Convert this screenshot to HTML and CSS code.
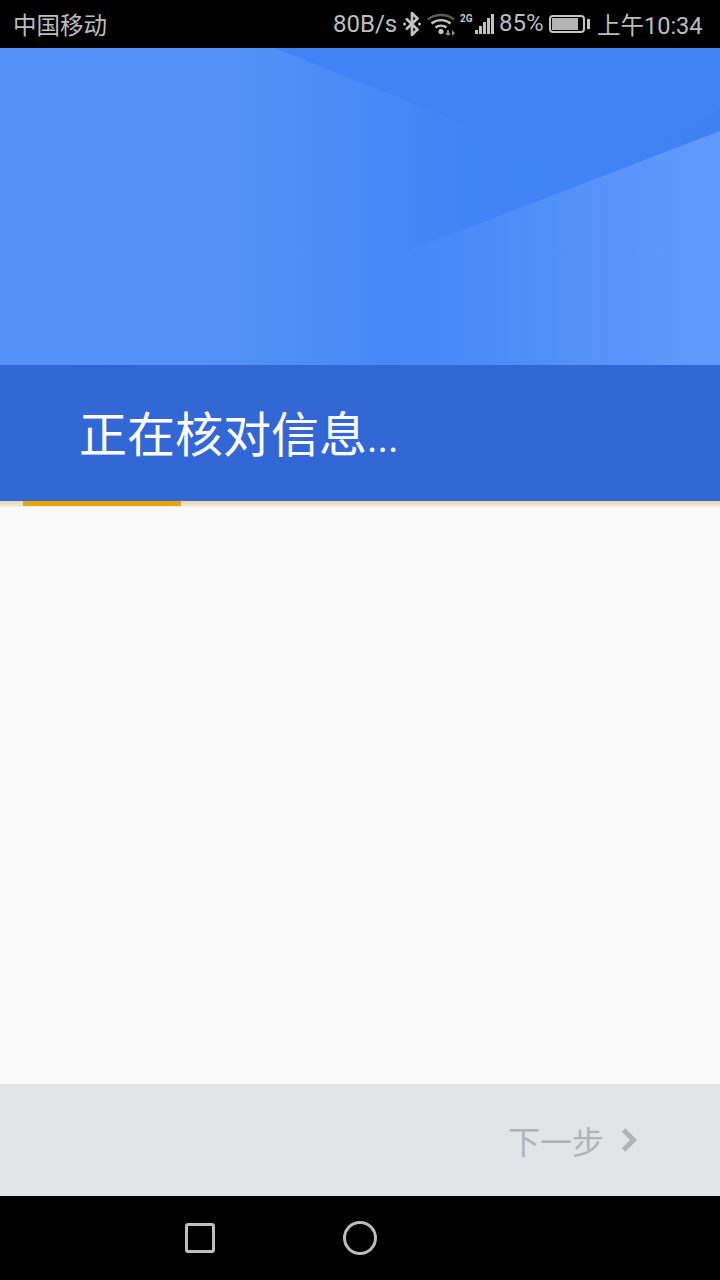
FILE: index.html
```html
<!DOCTYPE html>
<html lang="zh-CN">

<head>
    <meta charset="utf-8">
    <title>正在核对信息</title>
    <link rel="stylesheet" href="styles.css">
</head>

<body>
    <div class="screen">
        <div class="status-bar">
            <span class="carrier">中国移动</span>
            <div class="status-right">
                <span class="speed">80B/s</span>
                <svg class="icon-bt" width="18" height="24" viewBox="0 0 18 24">
                    <path d="M3 6.500 14.500 17.500 9 23V1l5.500 5.500L3 17.500" fill="none" stroke="#c4c4c4" stroke-width="2.600"/>
                    <circle cx="1.500" cy="12" r="1.500" fill="#c4c4c4"/>
                    <circle cx="16.500" cy="12" r="1.500" fill="#c4c4c4"/>
                </svg>
                <svg class="icon-wifi" width="28" height="24" viewBox="0 0 28 24">
                    <path d="M1 7.500C8 1.500 20 1.500 27 7.500" fill="none" stroke="#5c5c5c" stroke-width="2.400"/>
                    <path d="M4.500 11.500C10 7 18 7 23.500 11.500" fill="none" stroke="#c4c4c4" stroke-width="2.400"/>
                    <path d="M8.500 15.500C11.500 13 16.500 13 19.500 15.500" fill="none" stroke="#c4c4c4" stroke-width="2.400"/>
                    <circle cx="14" cy="19.500" r="2.600" fill="#c4c4c4"/>
                    <path d="M20 18h2v3h2l-3 3-3-3h2zM25 24v-6l3 3z" fill="#8f8f8f"/>
                </svg>
                <div class="signal">
                    <span class="net">2G</span>
                    <div class="bars">
                        <i class="bar-1"></i>
                        <i class="bar-2"></i>
                        <i class="bar-3"></i>
                        <i class="bar-4"></i>
                        <i class="bar-5"></i>
                    </div>
                </div>
                <span class="percent">85%</span>
                <div class="battery">
                    <div class="battery-body">
                        <div class="battery-level"></div>
                    </div>
                    <div class="battery-tip"></div>
                </div>
                <span class="clock">上午10:34</span>
            </div>
        </div>

        <div class="hero">
            <svg class="hero-art" width="720" height="317" viewBox="0 0 720 317" preserveAspectRatio="none">
                <defs>
                    <linearGradient id="heroBase" x1="0" y1="0" x2="1" y2="0">
                        <stop offset="0" stop-color="#5593f8"/>
                        <stop offset="0.320" stop-color="#5391f7"/>
                        <stop offset="0.640" stop-color="#4085f6"/>
                        <stop offset="1" stop-color="#3f83f6"/>
                    </linearGradient>
                    <linearGradient id="heroLight" x1="380" y1="0" x2="690" y2="0" gradientUnits="userSpaceOnUse">
                        <stop offset="0" stop-color="#6099fb" stop-opacity="0"/>
                        <stop offset="1" stop-color="#6099fb"/>
                    </linearGradient>
                    <linearGradient id="heroShade" x1="600" y1="60" x2="720" y2="60" gradientUnits="userSpaceOnUse">
                        <stop offset="0" stop-color="#3a7de8" stop-opacity="0"/>
                        <stop offset="1" stop-color="#3a7de8" stop-opacity="0.350"/>
                    </linearGradient>
                </defs>
                <rect width="720" height="317" fill="url(#heroBase)"/>
                <polygon points="275,0 720,0 720,83 599,130" fill="#3f83f6"/>
                <polygon points="720,60 720,83 600,129" fill="url(#heroShade)"/>
                <polygon points="720,83 720,317 340,317 340,229" fill="url(#heroLight)"/>
            </svg>
        </div>

        <div class="notice">
            <h1>正在核对信息<span class="dots">...</span></h1>
        </div>

        <div class="progress">
            <div class="progress-fill"></div>
        </div>

        <div class="content"></div>

        <div class="footer">
            <span class="next">下一步</span>
            <svg class="next-arrow" width="16" height="24" viewBox="0 0 16 24">
                <path d="M2.500 2 12.500 12 2.500 22" fill="none" stroke="#b0b4b7" stroke-width="5"/>
            </svg>
        </div>

        <div class="nav-bar">
            <div class="nav-cell"><div class="nav-square"></div></div>
            <div class="nav-cell"><div class="nav-circle"></div></div>
            <div class="nav-cell"></div>
        </div>
    </div>
</body>

</html>
```

FILE: styles.css
```css
body {
    margin: 0;
    padding: 0;
    background-color: #fafafa;
    font-family: "Noto Sans CJK SC", sans-serif;
}

.screen {
    width: 720px;
    height: 1280px;
    display: flex;
    flex-direction: column;
    overflow: hidden;
}

.status-bar {
    height: 48px;
    flex: none;
    display: flex;
    justify-content: space-between;
    align-items: center;
    padding: 0 16px 0 13px;
    background-color: #000;
    color: #bdbdbd;
    font-family: Roboto, "Noto Sans CJK SC", sans-serif;
    font-size: 24px;
}

.carrier {
    font-family: "Noto Sans CJK SC", sans-serif;
    font-size: 23.500px;
    line-height: 48px;
}

.status-right {
    display: flex;
    align-items: center;
}

.speed {
    width: 63px;
    margin-right: 7px;
    white-space: nowrap;
}

.icon-bt {
    margin-right: 6px;
}

.icon-wifi {
    margin-right: 5px;
}

.signal {
    width: 35px;
    height: 24px;
    display: flex;
    margin-right: 4px;
}

.net {
    width: 15px;
    font-size: 10px;
    font-weight: 700;
    line-height: 14px;
    color: #c8c8c8;
}

.bars {
    display: flex;
    align-items: flex-end;
    gap: 1px;
    height: 22px;
}

.bars i {
    display: block;
    width: 3px;
    background-color: #c4c4c4;
}

.bar-1 { height: 4px; }
.bar-2 { height: 8px; }
.bar-3 { height: 12px; }
.bar-4 { height: 16px; }
.bar-5 { height: 20px; }

.percent {
    width: 43px;
    margin-right: 7px;
    margin-top: -3px;
}

.battery {
    display: flex;
    align-items: center;
    margin-right: 7px;
}

.battery-body {
    width: 36px;
    height: 18px;
    box-sizing: border-box;
    border: 2px solid #c4c4c4;
    border-radius: 4px;
    padding: 1px;
}

.battery-level {
    width: 85%;
    height: 100%;
    background-color: #b4b4b4;
}

.battery-tip {
    width: 3px;
    height: 10px;
    margin-left: 2px;
    background-color: #c4c4c4;
}

.clock {
    width: 107px;
    white-space: nowrap;
    font-size: 23.500px;
}

.hero {
    height: 317px;
    flex: none;
}

.hero-art {
    display: block;
}

.notice {
    height: 136px;
    flex: none;
    box-sizing: border-box;
    padding-left: 79px;
    background-color: #3367d6;
}

.notice h1 {
    margin: 0;
    color: #fff;
    font-size: 48px;
    font-weight: 400;
    line-height: 133px;
}

.dots {
    font-family: Roboto, sans-serif;
    font-size: 40px;
}

.progress {
    height: 6px;
    flex: none;
    padding-left: 23px;
    background: linear-gradient(#e6d6aa, #f5efe0);
}

.progress-fill {
    width: 158px;
    height: 5px;
    background-color: #e5a50a;
}

.content {
    flex: 1;
    background-color: #fafafa;
}

.footer {
    height: 112px;
    flex: none;
    box-sizing: border-box;
    display: flex;
    justify-content: flex-end;
    align-items: center;
    padding: 0 83px 0 0;
    background-color: #e1e5e8;
}

.next {
    color: #b0b4b7;
    font-size: 32px;
    font-weight: 400;
    line-height: 112px;
}

.next-arrow {
    margin-left: 17px;
}

.nav-bar {
    height: 84px;
    flex: none;
    display: flex;
    justify-content: center;
    background-color: #000;
}

.nav-cell {
    width: 160px;
    display: flex;
    justify-content: center;
    align-items: center;
}

.nav-square {
    width: 30px;
    height: 30px;
    box-sizing: border-box;
    border: 3px solid #bdbdbd;
    border-radius: 3px;
}

.nav-circle {
    width: 34px;
    height: 34px;
    box-sizing: border-box;
    border: 3px solid #bdbdbd;
    border-radius: 50%;
}
```
